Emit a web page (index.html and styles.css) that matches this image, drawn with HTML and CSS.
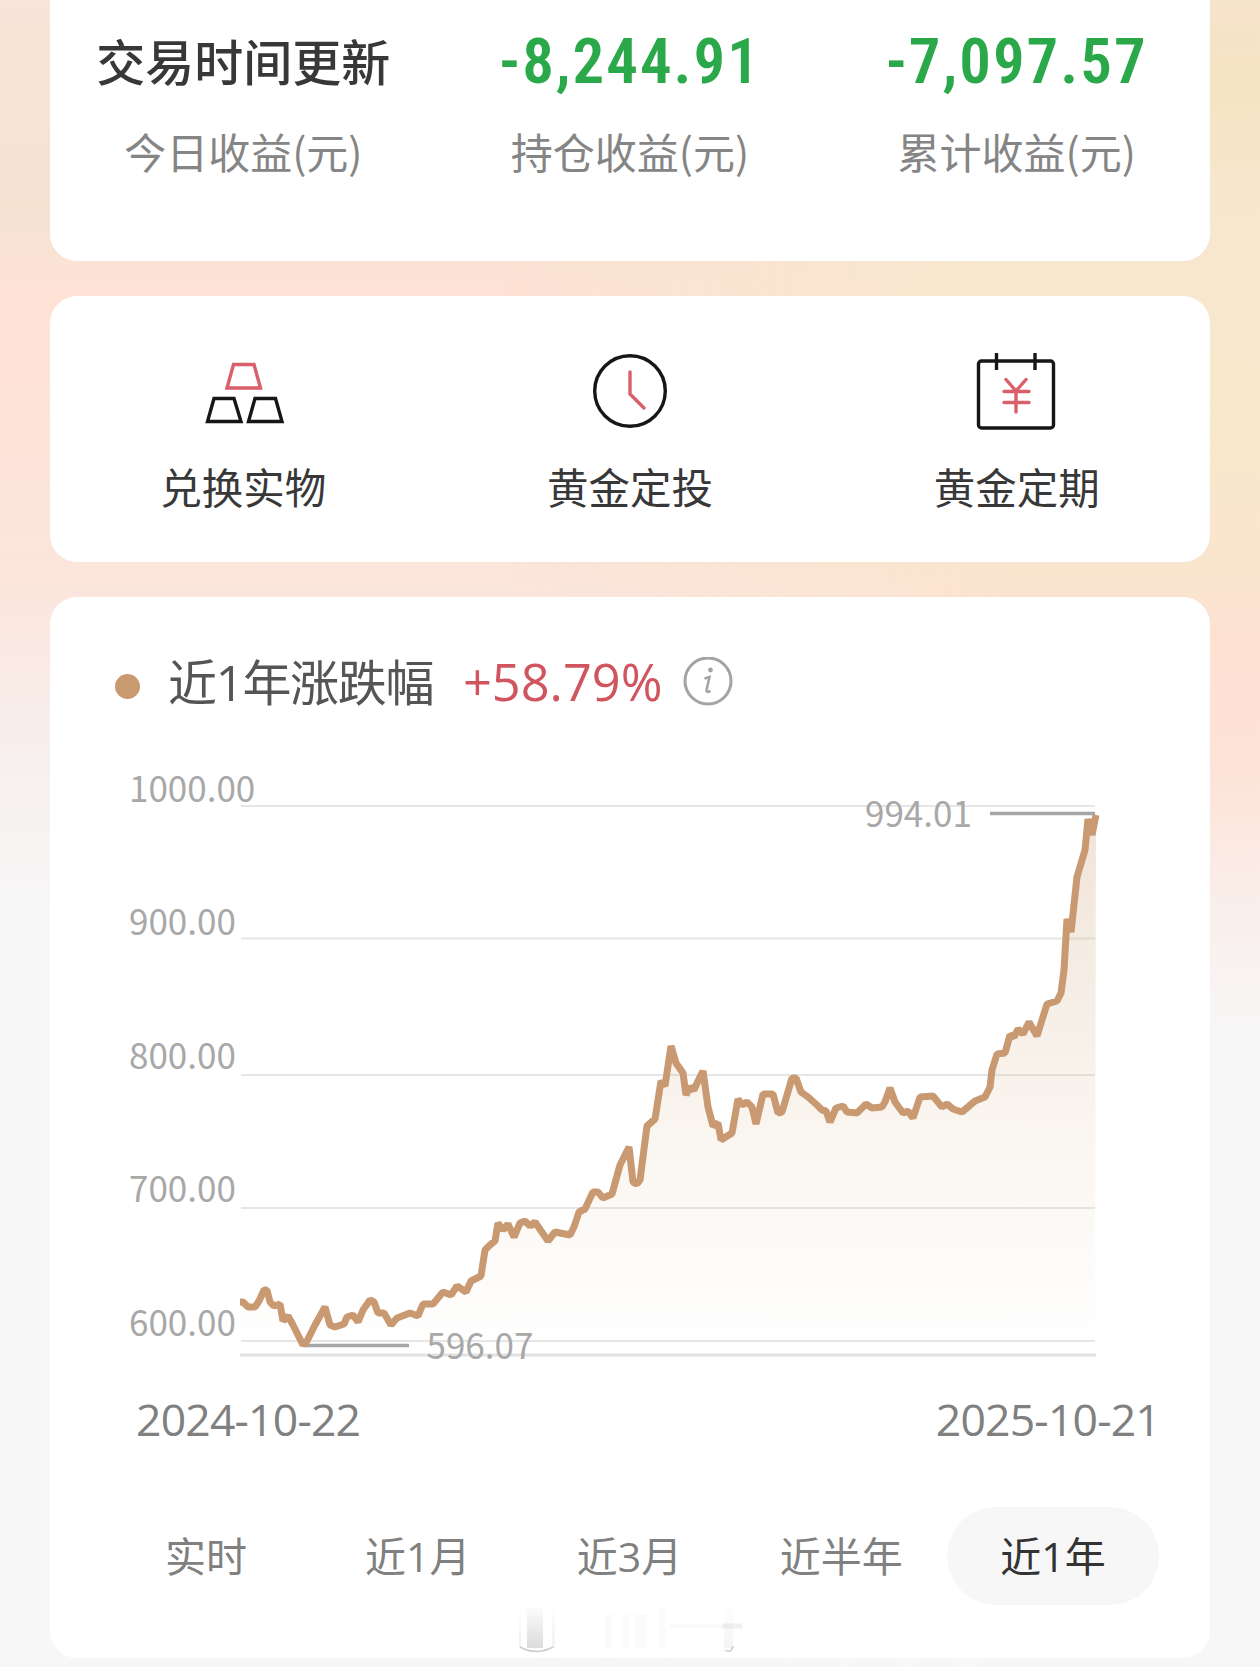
FILE: index.html
```html
<!DOCTYPE html>
<html lang="zh-CN">
<head>
    <meta charset="UTF-8">
    <title>积存金</title>
    <link rel="stylesheet" href="styles.css">
</head>
<body>
    <div class="page">
        <section class="card summary">
            <div class="summary-item">
                <div class="summary-value">交易时间更新</div>
                <div class="summary-label">今日收益(元)</div>
            </div>
            <div class="summary-item">
                <div class="summary-value number">-8,244.91</div>
                <div class="summary-label">持仓收益(元)</div>
            </div>
            <div class="summary-item">
                <div class="summary-value number">-7,097.57</div>
                <div class="summary-label">累计收益(元)</div>
            </div>
        </section>

        <section class="card actions">
            <a class="action">
                <svg class="action-icon" width="84" height="84" viewBox="0 0 84 84" fill="none" stroke-width="3.4">
                    <path d="M32.5 16.5H53L59.5 40H26Z" stroke="#d9606b"/>
                    <path d="M13 50.5H33L40 73.5H6.5Z M54 50.5H74.5L81 73.5H47.5Z" stroke="#161616"/>
                </svg>
                <span>兑换实物</span>
            </a>
            <a class="action">
                <svg class="action-icon" width="84" height="84" viewBox="0 0 84 84" fill="none" stroke-width="3.4">
                    <circle cx="42" cy="43" r="35.3" stroke="#161616"/>
                    <path d="M42 24V46L56 60" stroke="#d9606b" stroke-linecap="round"/>
                </svg>
                <span>黄金定投</span>
            </a>
            <a class="action">
                <svg class="action-icon" width="84" height="84" viewBox="0 0 84 84" fill="none" stroke-width="3.4">
                    <rect x="3.5" y="13" width="75" height="67" rx="3" stroke="#161616"/>
                    <path d="M21.5 5V22M60 5V22" stroke="#161616"/>
                    <path d="M31 31.5L41 43L51 31.5M29 43.5H54M29 54.5H54M41 43V64" stroke="#d9606b" stroke-linecap="round"/>
                </svg>
                <span>黄金定期</span>
            </a>
        </section>

        <section class="card trend">
            <div class="trend-header">
                <span class="dot"></span>
                <span class="trend-title">近1年涨跌幅</span>
                <span class="trend-rate">+58.79%</span>
                <svg class="info" width="50" height="50" viewBox="0 0 50 50" fill="none" stroke="#a3a3a3" stroke-width="3">
                    <circle cx="25" cy="24" r="23"/>
                    <path d="M21.5 21.5L26.5 20L23.5 33Q23 36 27.5 34" stroke-width="2.5"/>
                    <circle cx="27.5" cy="13" r="2.4" fill="#a3a3a3" stroke="none"/>
                </svg>
            </div>

            <svg class="chart" width="1160" height="620" viewBox="50 760 1160 620">
                <defs>
                    <linearGradient id="areaFill" gradientUnits="userSpaceOnUse" x1="0" y1="815" x2="0" y2="1355">
                        <stop offset="0" stop-color="#c89a72" stop-opacity="0.27"/>
                        <stop offset="0.5" stop-color="#cfa878" stop-opacity="0.14"/>
                        <stop offset="1" stop-color="#d9b98e" stop-opacity="0"/>
                    </linearGradient>
                </defs>
                <g class="grid">
                    <path d="M241 806H1095M241 938.5H1095M241 1075H1095M241 1208H1095M241 1341H1095"/>
                    <path class="base" d="M240 1355H1096"/>
                </g>
                <path id="area" fill="url(#areaFill)"/>
                <path class="marker" d="M990 813.5H1095M305 1345.5H409"/>
                <path id="line" class="line"/>
                <g class="axis">
                    <text x="129" y="802">1000.00</text>
                    <text x="129" y="935">900.00</text>
                    <text x="129" y="1069">800.00</text>
                    <text x="129" y="1202">700.00</text>
                    <text x="129" y="1336">600.00</text>
                    <text x="865" y="827">994.01</text>
                    <text x="426.5" y="1359">596.07</text>
                </g>
            </svg>

            <div class="dates">
                <span>2024-10-22</span>
                <span>2025-10-21</span>
            </div>

            <div class="tabs">
                <span class="tab">实时</span>
                <span class="tab">近1月</span>
                <span class="tab">近3月</span>
                <span class="tab">近半年</span>
                <span class="tab active">近1年</span>
            </div>

            <!-- faded mark under the tabs -->
            <svg class="mark" width="260" height="62" viewBox="0 0 260 62">
                <defs>
                    <linearGradient id="markFade" x1="0" y1="0" x2="0" y2="1">
                        <stop offset="0" stop-color="#777" stop-opacity="0.02"/>
                        <stop offset="1" stop-color="#777" stop-opacity="0.26"/>
                    </linearGradient>
                </defs>
                <rect x="27" y="14" width="16" height="40" fill="url(#markFade)"/>
                <rect x="19" y="14" width="2" height="40" fill="url(#markFade)" opacity="0.4"/>
                <rect x="52" y="14" width="3" height="40" fill="url(#markFade)" opacity="0.4"/>
                <path d="M20 53Q36 62 53 53" fill="none" stroke="#ccc" stroke-width="1.5"/>
                <path d="M105 20H112V54H105ZM122 20H129V54H122ZM135 20H147V54H135ZM159 14H165V54H159Z" fill="#777" opacity="0.03"/>
                <path d="M170 32H242" stroke="#777" stroke-width="4" opacity="0.03"/>
                <path d="M222 32H242" stroke="#777" stroke-width="6" opacity="0.06"/>
                <rect x="224" y="14" width="9" height="40" fill="url(#markFade)" opacity="0.3"/>
                <path d="M225 56Q231 60 233 52" fill="none" stroke="#ccc" stroke-width="1.5"/>
            </svg>
        </section>
    </div>

    <script>
        // x,y pairs of the price curve
        const points = [
            [240,1302],[243,1302],[248,1307],[255,1307],[259,1301],[264,1290],[267,1290],[270,1302],[274,1306],[280,1304],
            [283,1321],[288,1316],[293,1325],[298,1335],[303,1345],[307,1341],[315,1325],[325,1307],[330,1325],[335,1327],
            [344,1324],[347,1317],[353,1315],[358,1322],[363,1310],[370,1300],[374,1302],[378,1313],[384,1313],[391,1325],
            [397,1318],[410,1313],[418,1316],[423,1304],[433,1304],[443,1292],[451,1295],[457,1286],[466,1292],[471,1281],
            [481,1276],[485,1250],[490,1245],[495,1241],[498,1223],[503,1230],[508,1224],[514,1237],[520,1223],[525,1221],
            [530,1226],[535,1222],[548,1241],[555,1232],[570,1235],[574,1227],[579,1212],[585,1209],[593,1192],[598,1192],
            [603,1198],[612,1194],[620,1165],[629,1147],[633,1182],[637,1184],[640,1180],[647,1126],[655,1119],[661,1081],
            [665,1086],[671,1046],[676,1063],[683,1073],[686,1095],[690,1087],[694,1090],[698,1081],[703,1071],[708,1107],
            [713,1126],[718,1123],[721,1140],[732,1133],[738,1099],[742,1105],[747,1102],[752,1107],[756,1124],[763,1094],
            [773,1094],[778,1113],[782,1112],[792,1078],[796,1078],[801,1092],[808,1097],[817,1105],[822,1110],[826,1111],
            [830,1122],[836,1108],[843,1106],[847,1112],[857,1113],[866,1104],[872,1108],[882,1107],[885,1102],[890,1088],
            [895,1102],[903,1113],[908,1111],[913,1118],[920,1097],[933,1096],[942,1107],[947,1104],[953,1109],[962,1112],
            [975,1101],[985,1097],[990,1087],[992,1070],[997,1054],[1005,1053],[1010,1035],[1014,1037],[1018,1029],[1023,1034],
            [1029,1022],[1037,1036],[1047,1004],[1057,1001],[1061,993],[1064,970],[1067,919],[1071,932],[1077,877],[1085,850],
            [1088,819],[1092,835],[1096,815]
        ];
        const d = "M" + points.map(p => p.join(" ")).join("L");
        document.getElementById("line").setAttribute("d", d);
        document.getElementById("area").setAttribute("d", d + "L1095 1355L241 1355Z");
    </script>
</body>
</html>
```
FILE: styles.css
```css
* {
    box-sizing: border-box;
}
body {
    margin: 0;
    font-family: "Noto Sans CJK SC", sans-serif;
    background-color: #f7f7f7;
}
.page {
    position: relative;
    width: 1260px;
    height: 1667px;
    padding: 0 50px;
    overflow: hidden;
    display: flex;
    flex-direction: column;
    gap: 35px;
    background: linear-gradient(#f8e4d8 0, #f4e3d2 200px, #fde2d5 285px, #ffe2d6 350px, #fbe5dc 580px, #f7f1f0 780px, #f7f7f7 920px);
}
/* warmer tint that takes over on the right side */
.page::before {
    content: "";
    position: absolute;
    inset: 0;
    background: linear-gradient(#f6e3cc 0, #f5e4c2 80px, #f7e7cf 220px, #f8e8cb 420px, #f9e5cd 560px, #fde1d3 640px, #fde2d6 760px, #faeeea 900px, #f7f7f7 1040px);
    mask-image: linear-gradient(to right, transparent 40%, #000 80%);
}
.card {
    position: relative;
    background-color: #fff;
    border-radius: 27px;
}
.summary {
    height: 261px;
    padding-top: 21px;
    border-radius: 0 0 27px 27px;
    display: grid;
    grid-template-columns: repeat(3, 1fr);
    text-align: center;
}
.summary-value {
    height: 78px;
    line-height: 78px;
    font-size: 49px;
    font-weight: 500;
    color: #383838;
}
.summary-value.number {
    padding-top: 2px;
    font-family: "Roboto Condensed", Roboto, sans-serif;
    font-stretch: 75%;
    font-size: 63px;
    font-weight: 600;
    letter-spacing: 2px;
    color: #2ba84a;
}
.summary-label {
    margin-top: 22px;
    line-height: 60px;
    font-size: 42px;
    color: #858585;
}
.actions {
    height: 266px;
    padding-top: 52px;
    display: grid;
    grid-template-columns: repeat(3, 1fr);
}
.action {
    display: flex;
    flex-direction: column;
    align-items: center;
    gap: 24px;
    font-size: 41.5px;
    line-height: 60px;
    color: #383838;
}
.action-icon {
    display: block;
}
.trend {
    height: 1061px;
}
.trend-header {
    display: flex;
    align-items: center;
    height: 163px;
    padding: 6px 0 0 65px;
    font-family: "Open Sans", "Noto Sans CJK SC", sans-serif;
    font-size: 49px;
    line-height: 70px;
    color: #555;
}
.dot {
    width: 25px;
    height: 25px;
    margin: 10px 28px 0 0;
    border-radius: 50%;
    background-color: #c99a6f;
}
.trend-title {
    width: 266px;
    letter-spacing: -1.3px;
    white-space: nowrap;
}
.trend-rate {
    width: 200px;
    margin-left: 29px;
    font-size: 50.5px;
    color: #d0555f;
}
.info {
    margin-left: 20px;
}
.chart {
    display: block;
}
.grid path {
    stroke: #e6e6e6;
    stroke-width: 2;
}
.grid .base {
    stroke: #e2e2e2;
    stroke-width: 3;
}
.marker {
    stroke: #a6a6a6;
    stroke-width: 3.4;
}
.line {
    fill: none;
    stroke: #c99a72;
    stroke-width: 7;
    stroke-linejoin: bevel;
}
.axis text {
    font-size: 35px;
    fill: #a8a8a8;
}
.dates {
    display: flex;
    justify-content: space-between;
    padding: 0 50px 0 86px;
    margin-top: 9px;
    font-family: "Open Sans", sans-serif;
    font-size: 44.5px;
    letter-spacing: -0.8px;
    line-height: 60px;
    color: #808080;
}
.tabs {
    display: flex;
    padding: 0 51px 0 50px;
    margin-top: 58px;
}
.tab {
    flex: 1;
    height: 98px;
    line-height: 98px;
    text-align: center;
    font-family: "Open Sans", "Noto Sans CJK SC", sans-serif;
    font-size: 41px;
    color: #808080;
}
.tab.active {
    color: #333;
    background-color: #f7f7f7;
    border-radius: 49px;
}
.mark {
    position: absolute;
    left: 450px;
    bottom: 2px;
}
```
